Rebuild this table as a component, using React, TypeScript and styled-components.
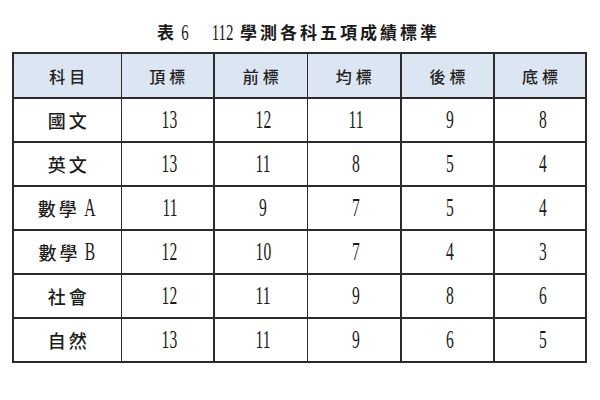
import styled, { createGlobalStyle } from "styled-components";

const GlobalStyle = createGlobalStyle`
  html, body {
    margin: 0;
    padding: 0;
    background: #ffffff;
  }
  body {
    font-family: "Noto Sans CJK TC", "Liberation Serif", serif;
    color: #1c1c1c;
  }
`;

const Page = styled.div`
  width: 600px;
  height: 400px;
  padding: 20px 0 0 12px;
  box-sizing: border-box;
`;

const Title = styled.h1`
  margin: 0 0 8px;
  width: 573px;
  height: 24px;
  display: flex;
  align-items: center;
  justify-content: center;
  font-size: 17px;
  font-weight: 700;
  line-height: 24px;
  letter-spacing: 3px;
  color: #1a1a1a;
`;

const TitleNum = styled.span<{ $left?: number; $right?: number }>`
  display: inline-block;
  font-family: "Liberation Serif", serif;
  font-size: 24px;
  font-weight: 400;
  letter-spacing: 0;
  transform: scaleX(0.62);
  margin: 0 ${(p) => p.$right ?? -4}px 0 ${(p) => p.$left ?? -4}px;
`;

const Table = styled.table`
  border-collapse: collapse;
  table-layout: fixed;
  width: 573px;
  border: 2px solid #2b2b2b;
`;

const Th = styled.th<{ $thick?: boolean }>`
  height: 43px;
  padding: 0;
  background: #dce6f2;
  border-top: 2px solid #2b2b2b;
  border-bottom: 2px solid #2b2b2b;
  border-right: ${(p) => (p.$thick ? 2 : 1)}px solid #2b2b2b;
  font-size: 16px;
  font-weight: 500;
  letter-spacing: 4px;
  text-indent: 4px;
  color: #222;
`;

const Td = styled.td<{ $thick?: boolean }>`
  height: 42px;
  padding: 0;
  text-align: center;
  border-bottom: 2px solid #2b2b2b;
  border-right: ${(p) => (p.$thick ? 2 : 1)}px solid #2b2b2b;
  font-size: 18px;
  font-weight: 500;
  letter-spacing: 3px;
  text-indent: 3px;
  color: #1c1c1c;
`;

const Num = styled.span`
  display: inline-block;
  font-family: "Liberation Serif", serif;
  font-size: 26px;
  font-weight: 400;
  letter-spacing: 0;
  transform: scaleX(0.6);
  line-height: 1;
`;

const SubjectNum = styled(Num)`
  margin-left: -2px;
`;

const widths = [108, 93, 93, 94, 93, 92];
const thick = [false, true, false, true, true, false];
const heads = ["科目", "頂標", "前標", "均標", "後標", "底標"];

const rows: { name: string; tag?: string; vals: number[] }[] = [
  { name: "國文", vals: [13, 12, 11, 9, 8] },
  { name: "英文", vals: [13, 11, 8, 5, 4] },
  { name: "數學", tag: "A", vals: [11, 9, 7, 5, 4] },
  { name: "數學", tag: "B", vals: [12, 10, 7, 4, 3] },
  { name: "社會", vals: [12, 11, 9, 8, 6] },
  { name: "自然", vals: [13, 11, 9, 6, 5] },
];

export default function App() {
  return (
    <>
      <GlobalStyle />
      <Page>
        <Title>
          表<TitleNum $left={2} $right={10}>6</TitleNum>
          <TitleNum $left={4} $right={0}>112</TitleNum>
          學測各科五項成績標準
        </Title>
        <Table>
          <colgroup>
            {widths.map((w, i) => (
              <col key={i} style={{ width: w }} />
            ))}
          </colgroup>
          <thead>
            <tr>
              {heads.map((h, i) => (
                <Th key={h} $thick={thick[i]}>
                  {h}
                </Th>
              ))}
            </tr>
          </thead>
          <tbody>
            {rows.map((r) => (
              <tr key={r.name + (r.tag ?? "")}>
                <Td $thick={thick[0]}>
                  {r.name}
                  {r.tag && <SubjectNum>{r.tag}</SubjectNum>}
                </Td>
                {r.vals.map((v, i) => (
                  <Td key={i} $thick={thick[i + 1]}>
                    <Num>{v}</Num>
                  </Td>
                ))}
              </tr>
            ))}
          </tbody>
        </Table>
      </Page>
    </>
  );
}
